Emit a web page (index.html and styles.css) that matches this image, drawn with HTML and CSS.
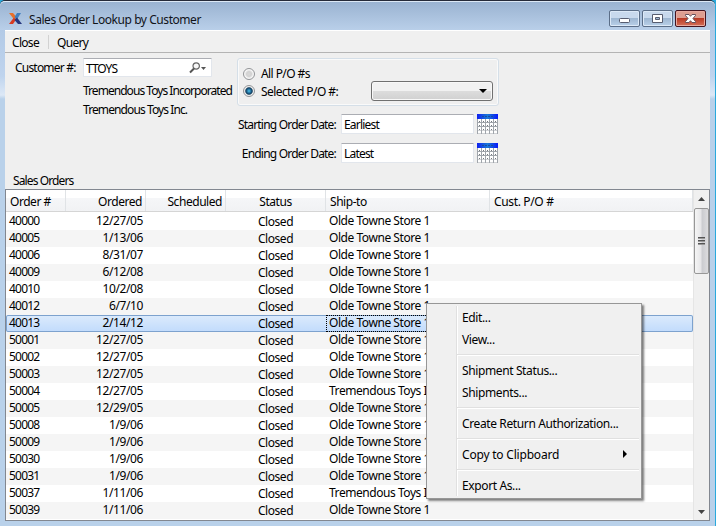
FILE: index.html
```
<!DOCTYPE html>
<html lang="en">
<head>
<meta charset="utf-8">
<title>Sales Order Lookup by Customer</title>
<link rel="stylesheet" href="styles.css">
</head>
<body>
<svg class="defs" width="0" height="0">
  <defs>
    <linearGradient id="calTop"><stop offset="0" stop-color="#1020f0"/><stop offset=".5" stop-color="#1878d8"/><stop offset="1" stop-color="#0818f8"/></linearGradient>
    <g id="calendar">
      <rect width="21" height="20" fill="#a0a5ab"/>
      <rect width="21" height="5" fill="url(#calTop)"/>
      <path d="M5 2.500h11" stroke="#184c9a" stroke-dasharray="2 1"/>
      <path d="M1 6.500h19M1 10.500h19M1 14.500h19M1 18h19" stroke="#fff" stroke-width="3" stroke-dasharray="3 1"/>
      <path d="M2 7.500h18M2 11.500h18M2 15.500h18" stroke="#75797e" stroke-dasharray="1 3"/>
    </g>
  </defs>
</svg>
<div class="window">
  <header class="titlebar">
    <svg class="logo" width="13" height="11" viewBox="0 0 13 11">
      <path d="M0 0h4l3.500 4-2 3z" fill="#e8702a"/><path d="M12 0H8L5.500 4l2 3z" fill="#3f7fc0"/><path d="M0 11l4.500-6 3 1-3.500 5z" fill="#d83a22"/><path d="M13 11L8 4.500 5.500 7 9 11z" fill="#27367e"/>
    </svg>
    <h1 class="title">Sales Order Lookup by Customer</h1>
    <div class="controls">
      <span class="control"><svg width="29" height="15"><rect x="9.500" y="7.500" width="10" height="4" rx="1" fill="#fff" stroke="#575d70"/></svg></span>
      <span class="control"><svg width="29" height="15"><path fill-rule="evenodd" d="M9.500 3.500h10v8h-10zM12.500 6.500h4v2h-4z" fill="#fff" stroke="#575d70"/></svg></span>
      <span class="control close"><svg width="29" height="15"><path d="M9.500 3.500h3.500l1.500 1.800L16 3.500h3.500v1L17 7.500l2.500 3v1H16l-1.500-1.800L13 11.500H9.500v-1l2.500-3-2.500-3z" fill="#fff" stroke="#64505c"/></svg></span>
    </div>
  </header>
  <main class="client">
    <nav class="menubar"><span>Close</span><span class="m-query">Query</span></nav>
    <section class="form">
      <div class="customer">
        <div class="customer-row"><label>Customer #:</label>
          <div class="input lookup"><span>TTOYS</span>
            <svg width="18" height="12" viewBox="0 0 18 12"><circle cx="7.200" cy="4" r="3.200" fill="#f8f8f8" stroke="#666" stroke-width="1.200"/><path d="M5 6.500L1 10.500" stroke="#555" stroke-width="2"/><path d="M12 5h5l-2.500 3z" fill="#555"/></svg>
          </div>
        </div>
        <p class="name first">Tremendous Toys Incorporated</p>
        <p class="name second-name">Tremendous Toys Inc.</p>
      </div>
      <div class="filters">
        <div class="group">
          <div class="option"><i class="radio"></i><span>All P/O #s</span></div>
          <div class="option second"><i class="radio on"></i><span>Selected P/O #:</span>
            <div class="combo"><svg width="8" height="4"><path d="M0 0h8L4 4z"/></svg></div>
          </div>
        </div>
        <div class="date"><label>Starting Order Date:</label><div class="input"><span>Earliest</span></div><svg width="21" height="20"><use href="#calendar"/></svg></div>
        <div class="date"><label>Ending Order Date:</label><div class="input"><span>Latest</span></div><svg width="21" height="20"><use href="#calendar"/></svg></div>
      </div>
    </section>
    <h2 class="caption">Sales Orders</h2>
    <section class="list">
      <div class="grid">
        <div class="row head"><span>Order #</span><span>Ordered</span><span>Scheduled</span><span>Status</span><span>Ship-to</span><span>Cust. P/O #</span></div>
        <div id="rows"></div>
      </div>
      <div class="scrollbar">
        <svg class="up" width="7" height="4"><path d="M0 4h7L3.500 0z" fill="#444"/></svg>
        <div class="thumb"><i></i><i></i><i></i></div>
        <svg class="down" width="7" height="4"><path d="M0 0h7L3.500 4z" fill="#444"/></svg>
      </div>
    </section>
  </main>
</div>
<div class="menu">
  <div class="item">Edit...</div>
  <div class="item">View...</div>
  <hr>
  <div class="item">Shipment Status...</div>
  <div class="item">Shipments...</div>
  <hr>
  <div class="item">Create Return Authorization...</div>
  <hr>
  <div class="item submenu">Copy to Clipboard<svg width="4" height="8"><path d="M0 0l4 4-4 4z"/></svg></div>
  <hr>
  <div class="item">Export As...</div>
</div>
<script src="app.js"></script>
</body>
</html>
```
FILE: app.js
```
const orders = [
  ["40000", "12/27/05"], ["40005", "1/13/06"], ["40006", "8/31/07"],
  ["40009", "6/12/08"], ["40010", "10/2/08"], ["40012", "6/7/10"],
  ["40013", "2/14/12"], ["50001", "12/27/05"], ["50002", "12/27/05"],
  ["50003", "12/27/05"], ["50004", "12/27/05", "Tremendous Toys Inc."],
  ["50005", "12/29/05"], ["50008", "1/9/06"], ["50009", "1/9/06"],
  ["50030", "1/9/06"], ["50031", "1/9/06"],
  ["50037", "1/11/06", "Tremendous Toys Inc."], ["50039", "1/11/06"]
];
const host = document.getElementById("rows");
for (const [number, ordered, shipTo = "Olde Towne Store 1"] of orders) {
  const row = document.createElement("div");
  row.className = number === "40013" ? "row selected" : "row";
  for (const text of [number, ordered, "", "Closed", shipTo, ""]) {
    const cell = document.createElement("span");
    cell.textContent = text;
    row.append(cell);
  }
  host.append(row);
}
```
FILE: styles.css
```
* { box-sizing: border-box; }
body { margin: 0; width: 716px; height: 526px; overflow: hidden; background: #29a9dc; font: 12px/17px "Noto Sans", sans-serif; color: #000; letter-spacing: -0.45px; }
h1, h2, p { margin: 0; font-weight: normal; font-size: 12px; }
svg { display: block; flex: none; }
.defs { position: absolute; }
.window { width: 715px; height: 526px; padding: 0 5px 5px; border-top: 1px solid #252a38; background: linear-gradient(#9db8d7 0, #b3cae6 30px, #bfd4ee 75px, #dce8f6 94px, #b9d1ea 98px, #b9d1ea 100%); border-radius: 5px 5px 0 0; }
.titlebar { display: flex; height: 29px; margin: 0 -5px; padding: 0 9px; background: linear-gradient(#9ab3d1, #b9cfe9); border-top: 1px solid #dce8f5; border-radius: 5px 5px 0 0; }
.logo { margin-top: 11px; }
.title { margin: 9px 0 0 7px; letter-spacing: -0.44px; color: #10131a; }
.controls { display: flex; gap: 2px; margin: 8px 0 0 auto; }
.control { width: 31px; height: 17px; border: 1px solid #5b6e88; border-radius: 2px; background: linear-gradient(#c8d9ed 50%, #9eb7d2 50%, #b9d0e9); box-shadow: inset 0 0 0 1px #dce9f7; }
.close { border-color: #431420; background: linear-gradient(#dd9e91 50%, #b93a25 50%, #d4705a); box-shadow: inset 0 0 0 1px #e8aaa0; }
.client { width: 705px; height: 491px; background: #efefef; }
.menubar { display: flex; height: 23px; padding: 4px 7px; background: #f0f0f0; border-top: 1px solid #fff; border-bottom: 1px solid #b4b4b4; letter-spacing: -0.7px; }
.menubar span { width: 36px; line-height: 15px; }
.menubar .m-query { width: auto; padding-left: 8px; border-left: 1px solid #d2d2d2; height: 14px; }
.form { display: flex; height: 120px; letter-spacing: -0.8px; }
.customer { width: 232px; flex: none; white-space: nowrap; }
.customer-row { display: flex; align-items: center; height: 19px; margin-top: 5px; }
.customer-row label { width: 78px; padding-left: 10px; }
.input { display: flex; align-items: center; width: 133px; height: 20px; padding: 1px 2px 0; background: #fff; border: 1px solid #e2e6ec; border-top-color: #abadb3; border-radius: 1px; }
.lookup { width: 129px; height: 19px; justify-content: space-between; padding-right: 4px; letter-spacing: -1px; }
.name { margin-left: 78px; height: 19px; line-height: 19px; }
.first { margin-top: 4px; letter-spacing: -0.96px; }
.second-name { letter-spacing: -0.9px; }
.group { width: 262px; height: 48px; margin-top: 5px; padding: 6px 5px 0 5px; border: 1px solid #d5dfe8; border-radius: 3px; box-shadow: inset 0 0 0 1px #fafafa; letter-spacing: -0.58px; }
.option { display: flex; align-items: center; height: 17px; }
.second { height: 20px; margin-top: -1px; }
.radio { width: 12px; height: 12px; margin-right: 6px; border: 1px solid #929497; border-radius: 50%; background: radial-gradient(#d8d8d8, #d2d2d2 35%, #f6f6f6 60%); }
.on { background: radial-gradient(#4cc4ee 0, #17547e 36%, #123c58 46%, #eee 60%); }
.combo { display: flex; align-items: center; justify-content: flex-end; width: 122px; height: 20px; margin-left: auto; padding-right: 5px; border: 1px solid #707070; border-radius: 3px; background: linear-gradient(#f1f1f1 50%, #dddddd 50%, #d0d0d0); box-shadow: inset 0 0 0 1px #f8f8f8; }
.date { display: flex; align-items: center; height: 20px; margin-top: 9px; }
.group + .date { margin-top: 8px; }
.date label { margin-left: -5px; padding-right: 5px; width: 109px; text-align: right; white-space: nowrap; flex: none; }
.date svg { margin-left: 3px; }
.caption { height: 16px; padding-left: 8px; line-height: 15px; letter-spacing: -0.88px; }
.list { display: flex; width: 705px; height: 332px; border: 1px solid #828790; background: #fff; }
.grid { width: 687px; overflow: hidden; }
.row { display: grid; grid-template-columns: 60px 80px 80px 100px 164px 203px; height: 17px; }
.row span { padding: 0 3px; line-height: 16px; white-space: nowrap; overflow: hidden; }
.row span:nth-child(2), .row span:nth-child(3) { text-align: right; }
.row span:nth-child(4) { text-align: center; }
#rows span:nth-child(1) { letter-spacing: -0.8px; }
#rows span:nth-child(2) { padding-right: 3px; letter-spacing: -0.4px; }
#rows span:nth-child(4) { padding-right: 4px; line-height: 18px; }
#rows .row:nth-child(even) { background: #f5f5f5; }
.head { height: 22px; margin-bottom: 1px; background: linear-gradient(#fff 40%, #f5f6f8 40%, #f1f2f4); border-bottom: 1px solid #d5d5d5; }
.head span { padding: 0 4px; line-height: 23px; border-right: 1px solid #e0e3e6; }
.head span:nth-child(2), .head span:nth-child(3) { padding-right: 3px; }
.head span:nth-child(6) { letter-spacing: -0.35px; }
#rows .selected { border-radius: 2px; background: linear-gradient(#dcebfc, #c1dbfc); box-shadow: inset 0 0 0 1px #7da2ce; }
.selected span:nth-child(5) { outline: 1px dotted #000; outline-offset: -1px; }
.scrollbar { display: flex; flex-direction: column; align-items: center; width: 16px; background: #f0f0f0; border-left: 1px solid #e5e5e5; }
.up { margin-top: 7px; }
.thumb { display: flex; flex-direction: column; justify-content: center; align-items: center; gap: 1px; width: 15px; height: 66px; margin-top: 7px; border: 1px solid #979797; border-radius: 2px; background: linear-gradient(90deg, #f5f5f5, #e6e6e8 45%, #cbccd0 55%, #dcdcde); }
.thumb i { width: 7px; height: 2px; border-top: 1px solid #555; background: #999; }
.down { margin: auto 0 6px; }
.menu { position: absolute; left: 426px; top: 303px; width: 216px; height: 196px; padding: 2px; border: 1px solid #979797; background: linear-gradient(90deg, transparent 29px, #e0e0e0 29px, #e0e0e0 30px, #fff 30px, #fff 31px, transparent 31px) 0 2px / 100% 190px no-repeat #f0f0f0; box-shadow: 2px 2px 2px rgba(0,0,0,.5); }
.item { display: flex; align-items: center; height: 22px; padding: 0 14px 0 33px; white-space: nowrap; letter-spacing: -0.38px; }
.submenu { padding-right: 12px; letter-spacing: -0.2px; }
.item svg { margin-left: auto; }
.menu hr { height: 2px; margin: 4px 0 3px 28px; border: 0; border-top: 1px solid #e0e0e0; background: #fff; }
```
